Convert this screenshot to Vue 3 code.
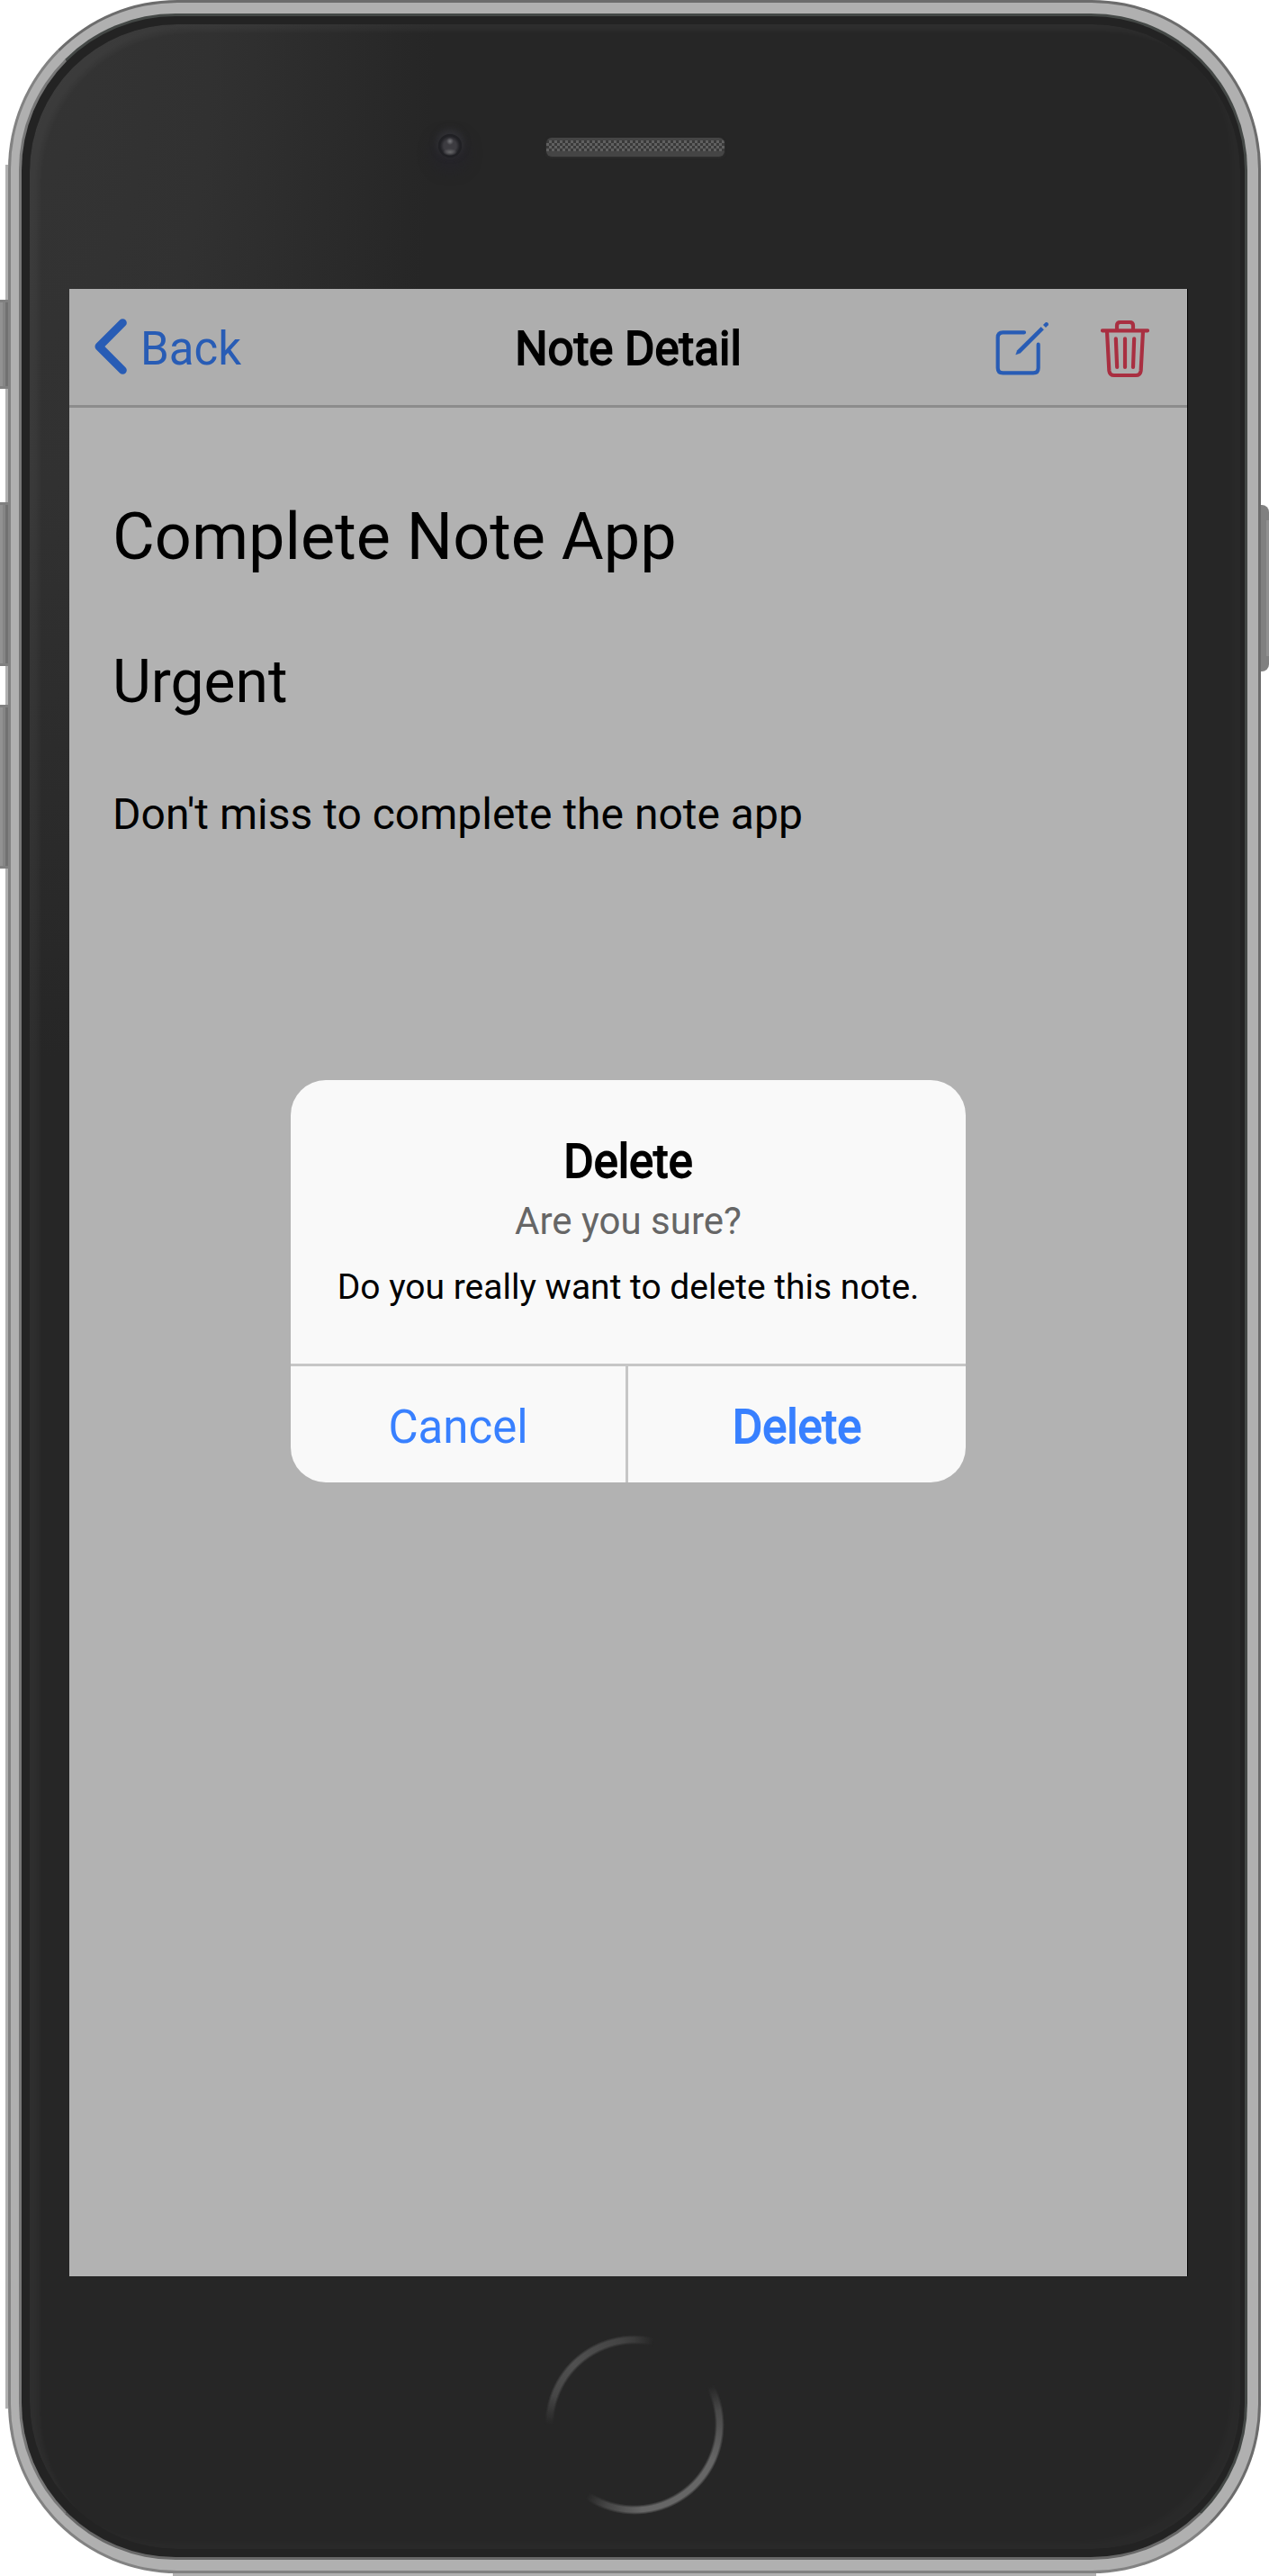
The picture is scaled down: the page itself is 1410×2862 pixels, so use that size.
<script setup>
const sideButtons = [
  { name: 'mute', side: 'left' },
  { name: 'volume-up', side: 'left' },
  { name: 'volume-down', side: 'left' },
  { name: 'power', side: 'right' },
]
</script>

<template>
  <div class="stage">
    <span v-for="b in sideButtons" :key="b.name" class="side-button" :class="[b.side, b.name]"></span>
    <div class="frame">
      <div class="rim">
        <div class="glass">
          <span class="camera"></span>
          <span class="speaker"></span>
          <span class="home"></span>
        </div>
      </div>
    </div>

    <main class="screen">
      <header class="toolbar">
        <a class="back">
          <svg width="36" height="62.33" viewBox="106 133 108 187">
            <path d="M200 147L121 226L200 305" fill="none" stroke="currentColor" stroke-width="27" stroke-linecap="round" stroke-linejoin="round" />
          </svg>
          <span>Back</span>
        </a>
        <h1 class="title strong">Note Detail</h1>
        <div class="actions">
          <svg class="create" width="60" height="61" viewBox="139 140 180 183">
            <g fill="none" stroke="currentColor" stroke-width="12.5" stroke-linecap="round" stroke-linejoin="round">
              <path d="M235 177H164Q147 177 147 194V295Q147 312 164 312H265Q282 312 282 295V217" />
            </g>
            <path d="M291 159L300 168L222 246L207 251L212 237Z" fill="currentColor" stroke="currentColor" stroke-width="1" />
            <path d="M298 152L306 144Q310 141 314 145Q318 149 315 153L307 161Z" fill="currentColor" />
          </svg>
          <svg class="trash" width="54" height="65" viewBox="489 133 162 195">
            <g fill="none" stroke="currentColor" stroke-width="12.5" stroke-linecap="round" stroke-linejoin="round">
              <path d="M495 170H645M543 168V153Q543 142 554 142H586Q597 142 597 153V168M510 172L517 303Q519 319 534 319H606Q621 319 623 303L630 172M539.500 197L543.500 292M570 197V292M600.500 197L597 292" />
            </g>
          </svg>
        </div>
      </header>

      <section class="note">
        <h2>Complete Note App</h2>
        <h3>Urgent</h3>
        <p>Don't miss to complete the note app</p>
      </section>

      <div class="overlay">
        <div class="alert" role="alertdialog">
          <div class="alert-body">
            <div class="alert-title strong">Delete</div>
            <div class="alert-sub">Are you sure?</div>
            <div class="alert-text">Do you really want to delete this note.</div>
          </div>
          <div class="alert-buttons">
            <button>Cancel</button>
            <button class="strong">Delete</button>
          </div>
        </div>
      </div>
    </main>
  </div>
</template>

<style>
body {
  background: #fff;
}
</style>

<style scoped>
.stage {
  position: relative;
  box-sizing: border-box;
  width: 1410px;
  height: 2862px;
  padding: 321px 91px 333px 77px;
  overflow: hidden;
  background: #fff;
  font-family: Roboto, sans-serif;
}

/* Device body */
.frame {
  position: absolute;
  inset: 0 9px 3px 9px;
  box-sizing: border-box;
  border: 3px solid #6c6c6c;
  border-left-color: #828282;
  border-bottom-color: #828282;
  border-radius: 188px;
  background: #b0b0b0;
  padding: 12px 12px 12px 9px;
}
.frame::before,
.frame::after {
  content: '';
  position: absolute;
  background: #b0b0b0;
}
.frame::before {
  left: -6px;
  top: 180px;
  bottom: 180px;
  width: 3px;
}
.frame::after {
  bottom: -6px;
  left: 180px;
  right: 180px;
  height: 3px;
}
.rim {
  box-sizing: border-box;
  width: 100%;
  height: 100%;
  border-radius: 174px;
  background: #232323;
  border: 3px solid #444846;
  border-left-color: #777;
  border-bottom-color: #686868;
  padding: 9px 5px 9px 9px;
}
.glass {
  position: relative;
  width: 100%;
  height: 100%;
  border-radius: 164px;
  background: radial-gradient(450px 1150px at 0 0, #343434 0%, #313131 45%, #2c2c2c 70%, #262626 100%) #262626;
  box-shadow: inset 15px 12px 7px -5px rgba(255, 255, 255, 0.045), inset -14px -12px 9px -4px rgba(255, 255, 255, 0.02);
}
.camera {
  position: absolute;
  left: 454px;
  top: 122px;
  width: 26px;
  height: 26px;
  border-radius: 50%;
  background:
    radial-gradient(circle at 13px 8px, #77777b 0, transparent 4px),
    radial-gradient(ellipse 8px 4px at 13px 20px, #68686a 0, transparent 100%),
    radial-gradient(circle, #3d3c41 0 7px, #202024 11px);
  box-shadow: 0 -3px 7px 2px #303034, 0 8px 14px 8px rgba(37, 36, 43, 0.7);
}
.speaker {
  position: absolute;
  left: 574px;
  top: 126px;
  width: 198px;
  height: 21px;
  border-radius: 6px;
  background:
    linear-gradient(#454545 0 3px, transparent 3px 15px, #454545 15px),
    conic-gradient(#606060 25%, #3a3a3a 0 50%, #606060 0 75%, #3a3a3a 0) 0 3px / 6px 6px;
  box-shadow: 0 1px 3px #303030;
}
.home {
  position: absolute;
  left: 572px;
  top: 2567px;
  width: 200px;
  height: 200px;
  border-radius: 50%;
  background: conic-gradient(#3b3b3b 0deg, transparent 13deg 63deg, #484848 80deg, #666 115deg, #666 175deg, #444 200deg, transparent 214deg 270deg, #474747 290deg, #505050 315deg, #444 350deg, #3b3b3b 360deg);
  -webkit-mask: radial-gradient(circle, transparent 89px, #000 92px 97px, transparent 100px);
  mask: radial-gradient(circle, transparent 89px, #000 92px 97px, transparent 100px);
}
.side-button {
  position: absolute;
  box-sizing: border-box;
  width: 9px;
  background: linear-gradient(90deg, #929292 0 3px, #858585 3px 6px, #717171 6px);
  border-top: 3px solid #808080;
  border-bottom: 3px solid #808080;
  z-index: 1;
}
.left {
  left: 0;
}
.right {
  right: 0;
  background: linear-gradient(90deg, #808080 0 6px, #909090 6px);
  border-width: 17px 0;
  border-radius: 0 8px 8px 0;
}
.mute {
  top: 333px;
  height: 99px;
}
.volume-up {
  top: 558px;
  height: 182px;
}
.volume-down {
  top: 783px;
  height: 182px;
}
.power {
  top: 561px;
  height: 185px;
}

/* App screen */
.screen {
  position: relative;
  width: 1242px;
  height: 2208px;
  background: #b2b2b2;
  box-shadow: 1px 0 0 #000;
  color: #000;
}
.toolbar {
  box-sizing: border-box;
  height: 132px;
  padding: 0 42px 0 28px;
  display: grid;
  grid-template-columns: 1fr auto 1fr;
  align-items: center;
  background: #aeaeae;
  border-bottom: 3px solid #8c8c8c;
}
.back {
  display: flex;
  align-items: center;
  gap: 15px;
  color: #285cb5;
  font-size: 51px;
  line-height: 60px;
}
.back span {
  padding-top: 5px;
}
.strong {
  -webkit-text-stroke: 1.8px currentColor;
}
.title {
  margin: 5px 0 0 14px;
  font-size: 51px;
  line-height: 60px;
  font-weight: 400;
}
.actions {
  display: flex;
  justify-content: flex-end;
  align-items: center;
  gap: 57px;
  padding-top: 3px;
}
.create {
  color: #285cb5;
}
.trash {
  color: #a92f41;
}
.note {
  padding: 48px;
}
.note h2,
.note h3,
.note p {
  margin: 0;
  font-weight: 400;
  white-space: nowrap;
}
.note h2 {
  margin-top: 53px;
  font-size: 72px;
  line-height: 86px;
}
.note h3 {
  margin-top: 79px;
  font-size: 66px;
  line-height: 78px;
}
.note p {
  margin-top: 78px;
  font-size: 48px;
  line-height: 60px;
}

/* Confirmation dialog */
.overlay {
  position: absolute;
  inset: 0;
  display: flex;
  align-items: center;
  justify-content: center;
}
.alert {
  width: 750px;
  height: 447px;
  margin-top: -3px;
  display: flex;
  flex-direction: column;
  border-radius: 39px;
  overflow: hidden;
  background: #f9f9f9;
}
.alert-body {
  flex: 1;
  text-align: center;
  white-space: nowrap;
}
.alert-title {
  margin-top: 61px;
  font-size: 51px;
  line-height: 60px;
}
.alert-sub {
  margin-top: 11px;
  font-size: 42px;
  line-height: 50px;
  color: #666;
}
.alert-text {
  margin-top: 25px;
  font-size: 39px;
  line-height: 46px;
}
.alert-buttons {
  display: flex;
  box-sizing: border-box;
  height: 132px;
  border-top: 3px solid #c6c6c6;
}
.alert-buttons button {
  flex: none;
  width: 50%;
  box-sizing: border-box;
  margin: 0;
  padding: 6px 0 0;
  border: 0;
  background: none;
  font-family: inherit;
  font-size: 51px;
  color: #3880ff;
}
.alert-buttons button:first-child {
  border-right: 3px solid #c6c6c6;
}
</style>
